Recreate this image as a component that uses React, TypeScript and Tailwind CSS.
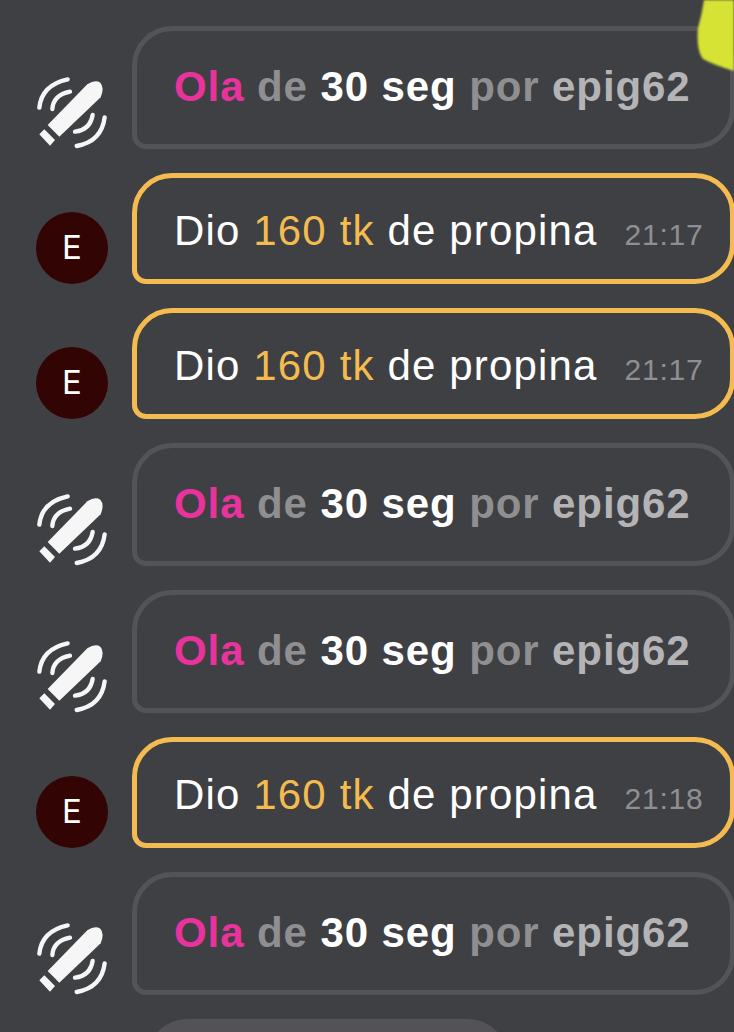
const rows = [
  { type: 'ola' },
  { type: 'tip', time: '21:17' },
  { type: 'tip', time: '21:17' },
  { type: 'ola' },
  { type: 'ola' },
  { type: 'tip', time: '21:18' },
  { type: 'ola' },
]

function VibrationIcon() {
  return (
    <svg viewBox="105 225 225 225" className="w-[75px] h-[75px] shrink-0 -mb-px -ml-px -mr-0.5" fill="none">
      <path d="M143 375 L262 253 Q285 238 301 248 Q314 262 302 292 L178 410 Z" fill="#f6f6f6" />
      <path d="M133 388 L165 420 L150 437 L118 403 Z" fill="#f6f6f6" />
      <g stroke="#f6f6f6" strokeWidth="13" strokeLinecap="round">
        <path d="M118 323 Q125 255 203 238" />
        <path d="M157 327 Q160 285 210 275" />
        <path d="M225 395 Q270 390 278 345" />
        <path d="M230 438 Q305 425 314 352" />
      </g>
    </svg>
  )
}

function Avatar() {
  return (
    <div className="w-[72px] h-[72px] shrink-0 rounded-full bg-[#330404] flex items-center justify-center text-white text-[33px] font-['Inter',sans-serif]">
      E
    </div>
  )
}

function OlaCard() {
  return (
    <div className="flex-1 h-[123px] border-[5px] border-[#535358] rounded-[40px] rounded-bl-[14px] pl-[37px] pt-[32px] text-[42px] leading-[48px] tracking-[0.9px] font-bold whitespace-nowrap">
      <span className="text-[#e8329c]">Ola</span> <span className="text-[#8f8f92]">de</span>{' '}
      <span className="text-white">30 seg</span> <span className="text-[#8f8f92]">por</span>{' '}
      <span className="text-[#b4b4b7]">epig62</span>
    </div>
  )
}

function TipCard({ time }: { time: string }) {
  return (
    <div className="flex-1 h-[111px] border-[5px] border-[#f3bb50] rounded-[40px] rounded-bl-[14px] pl-[37px] pt-[29px] text-[42px] leading-[48px] tracking-[1.15px] text-white whitespace-nowrap flex items-baseline">
      <span>
        Dio <span className="text-[#f3bb50]">160 tk</span> de propina
      </span>
      <span className="ml-[27px] text-[30px] tracking-[0.8px] text-[#8f8f92]">{time}</span>
    </div>
  )
}

export default function App() {
  return (
    <div className="relative h-[1032px] overflow-hidden bg-[#3f4044] font-['Liberation_Sans',sans-serif]">
      <div className="flex flex-col gap-6 pt-[26px] pl-[36px] w-[735px]">
        {rows.map((row, i) => (
          <div key={i} className="flex items-end gap-6">
            {row.type === 'ola' ? <VibrationIcon /> : <Avatar />}
            {row.type === 'ola' ? <OlaCard /> : <TipCard time={row.time!} />}
          </div>
        ))}
        <div className="ml-[111px] w-[361px] h-20 shrink-0 rounded-t-[40px] bg-[#525257]" />
      </div>
      <svg viewBox="0 0 40 72" className="absolute top-0 right-0 w-10 h-[72px] blur-[1px]">
        <path d="M10 0 Q8 14 4 28 Q2 50 9 59 Q20 65 40 71 L40 0 Z" fill="#d6e234" />
      </svg>
    </div>
  )
}
